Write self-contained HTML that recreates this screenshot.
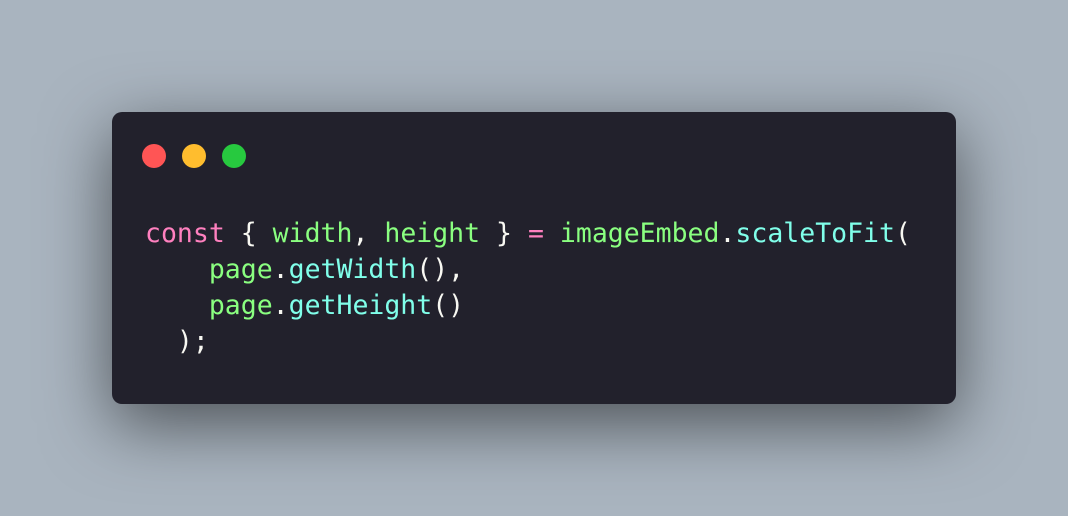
<!DOCTYPE html>
<html><head><style>
html,body{margin:0;padding:0;width:1068px;height:516px;overflow:hidden;background:#a9b4bf;}
.win{position:absolute;left:112px;top:112px;width:844px;height:292px;background:#22212c;border-radius:10px;box-shadow:0 20px 68px rgba(0,0,0,0.55);}
.dot{position:absolute;top:144px;width:24px;height:24px;border-radius:50%;}
pre{position:absolute;left:145px;top:216px;margin:0;font-family:"DejaVu Sans Mono","Liberation Mono",monospace;font-size:26.5px;line-height:36px;color:#f8f8f2;}
.k{color:#ff80bf}.g{color:#8aff80}.c{color:#80ffea}
</style></head><body>
<div class="win"></div>
<div class="dot" style="left:142px;background:#ff5555"></div>
<div class="dot" style="left:182px;background:#ffbd2e"></div>
<div class="dot" style="left:222px;background:#27c93f"></div>
<pre><span class="k">const</span> { <span class="g">width</span>, <span class="g">height</span> } <span class="k">=</span> <span class="g">imageEmbed</span>.<span class="c">scaleToFit</span>(
    <span class="g">page</span>.<span class="c">getWidth</span>(),
    <span class="g">page</span>.<span class="c">getHeight</span>()
  );</pre>
</body></html>
